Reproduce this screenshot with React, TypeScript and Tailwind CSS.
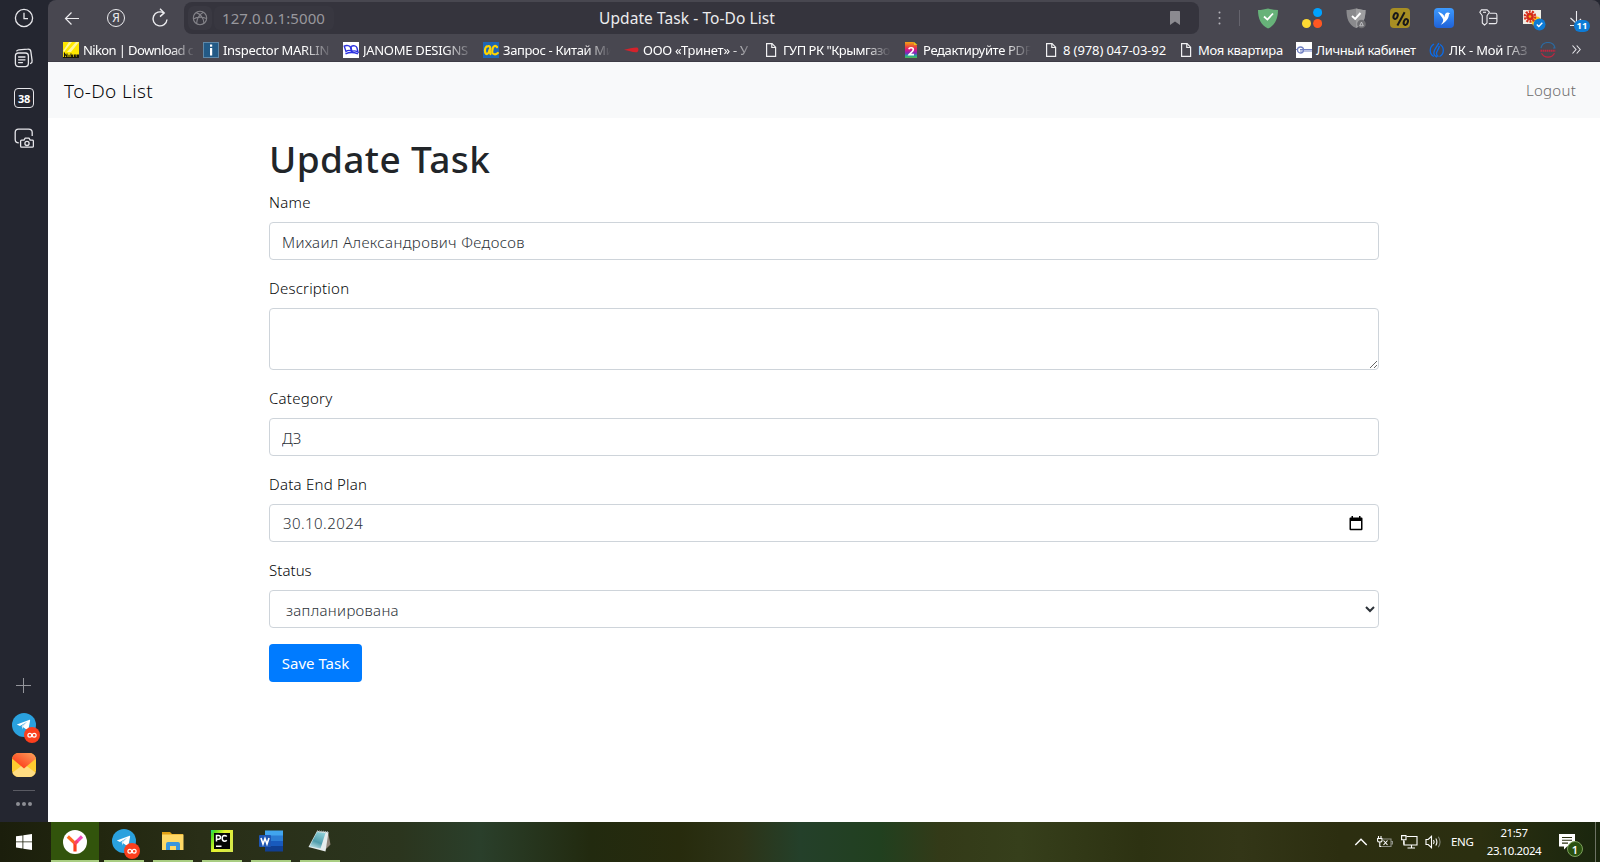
import type { ReactNode } from "react";

/* ---------- Sidebar icons ---------- */

const ClockIcon = () => (
  <svg width="20" height="20" viewBox="0 0 20 20" fill="none" stroke="#e6e6ea" strokeWidth="1.3">
    <circle cx="10" cy="10" r="8.6" />
    <path d="M10 4.8V10.6H14" />
  </svg>
);

const PagesIcon = () => (
  <svg width="20" height="20" viewBox="0 0 20 20" fill="none" stroke="#e6e6ea" strokeWidth="1.3" strokeLinecap="round">
    <rect x="1.4" y="5" width="13" height="13.6" rx="3" />
    <path d="M2.8 2.9C3.4 2.2 4 2 4.8 1.9L13.6 1.2C15.5 1 16.7 2 16.9 3.8L18.1 12.6C18.3 14 17.7 15 16.6 15.5" />
    <path d="M4.6 9H11M4.6 11.8H11M4.6 14.6H8.5" />
  </svg>
);

const ScreenshotIcon = () => (
  <svg width="20" height="20" viewBox="0 0 20 20" fill="none" stroke="#e6e6ea" strokeWidth="1.3" strokeLinejoin="round">
    <path d="M4.8 14.8C2.6 14.8 1.2 13.6 1.2 11.4V4.4C1.2 2.3 2.4 1.2 4.4 1.2H14.6C16.8 1.2 18.2 2.4 18.2 4.4V8" />
    <path d="M7.6 12.2H10L11.2 10.2H15L16.2 12.2H18.4C19 12.2 19.4 12.6 19.4 13.2V18C19.4 18.6 19 19.2 18.4 19.2H7.6C7 19.2 6.6 18.6 6.6 18V13.2C6.6 12.6 7 12.2 7.6 12.2Z" />
    <circle cx="13" cy="15.4" r="2.1" />
  </svg>
);

const TelegramIcon = () => (
  <svg width="28" height="30" viewBox="0 0 28 30">
    <circle cx="12" cy="12" r="12" fill="#2aa1de" />
    <path d="M4.8 11.6L17 6.9C17.8 6.6 18.3 6.9 18.1 7.8L16.4 16.6C16.2 17.4 15.7 17.5 15.1 17.1L9.8 13.3L15.2 8.8L8 12.9Z" fill="#fff" />
    <path d="M9.6 13L15.6 8.6L11.2 13.6L10.6 16.4Z" fill="#d2e6f2" />
    <circle cx="20" cy="22" r="8" fill="#fc3f1d" />
    <g fill="none" stroke="#fff" strokeWidth="1.2">
      <circle cx="17.8" cy="22.2" r="1.9" />
      <circle cx="22.2" cy="22.2" r="1.9" />
    </g>
  </svg>
);

const MailIcon = () => (
  <svg width="24" height="24" viewBox="0 0 24 24">
    <defs>
      <linearGradient id="flap" x1="0" y1="1" x2="1" y2="0">
        <stop offset="0.2" stopColor="#fc3f1d" />
        <stop offset="1" stopColor="#ffa25c" />
      </linearGradient>
      <clipPath id="mailShape"><rect width="24" height="24" rx="6.5" /></clipPath>
    </defs>
    <g clipPath="url(#mailShape)">
      <rect width="24" height="24" fill="#ffcc2f" />
      <path d="M12 11L24 20V24H0V20Z" fill="#ffdc82" />
      <path d="M0 0H24V5.5L12 15.5L0 5.5Z" fill="url(#flap)" />
    </g>
  </svg>
);

/* ---------- Toolbar icons ---------- */

const BackIcon = () => (
  <svg width="16" height="16" viewBox="0 0 16 16" fill="none" stroke="#ececef" strokeWidth="1.2">
    <path d="M16 8.5H2.5M8.5 2.5L2.5 8.5L8.5 14.5" />
  </svg>
);

const ReloadIcon = () => (
  <svg width="18" height="20" viewBox="0 0 18 20" fill="none" stroke="#ececef" strokeWidth="1.4">
    <path d="M12.8 5A7 7 0 1 0 16 11.5" />
    <path d="M9 0.8L13.2 4.9L9 8.6" />
  </svg>
);

const GlobeIcon = () => (
  <svg width="16" height="16" viewBox="0 0 16 16" fill="none" stroke="#85848a" strokeWidth="1.1">
    <circle cx="8" cy="8" r="6.7" />
    <path d="M4.2 2.6C8 3.5 11.5 7.5 12 13.2M11.5 2.3C8 4 5 8 4.6 13.7M1.4 9C5 6.8 10 6.6 14.6 8.6" />
  </svg>
);

const GreenShield = () => (
  <svg width="20" height="21" viewBox="0 0 20 21">
    <path d="M10 0.5C13 1.4 16.5 2 20 2C20 10 17.5 17 10 20.5C2.5 17 0 10 0 2C3.5 2 7 1.4 10 0.5Z" fill="#67b279" />
    <path d="M6 8.5L9.4 11.6L15 5.5" fill="none" stroke="#fff" strokeWidth="1.8" />
  </svg>
);

const ThreeDots = () => (
  <svg width="20" height="20" viewBox="0 0 20 20">
    <circle cx="15.6" cy="4.5" r="4.5" fill="#00a2ff" />
    <circle cx="4.5" cy="15.5" r="4.5" fill="#ffdb33" />
    <circle cx="15.6" cy="15.5" r="4.5" fill="#ff5722" />
  </svg>
);

const GrayShield = () => (
  <svg width="20" height="21" viewBox="0 0 20 21">
    <path d="M10 0.5C13 1.4 16.5 2 19.5 2C19.5 10 17.5 17 10 20C2.5 17 0.5 10 0.5 2C3.5 2 7 1.4 10 0.5Z" fill="#8a8a8d" />
    <path d="M10 0.5C13 1.4 16.5 2 19.5 2C19.5 10 17.5 17 10 20Z" fill="#9e9ea0" />
    <path d="M6 8L9.2 11L14.5 5" fill="none" stroke="#fff" strokeWidth="1.9" />
    <circle cx="15.5" cy="16" r="4.3" fill="#6e6e72" />
    <path d="M13.7 17.8L15.5 14L17.3 17.8Z" fill="none" stroke="#c9c9cc" strokeWidth="0.9" />
  </svg>
);

const PercentIcon = () => (
  <svg width="20" height="20" viewBox="0 0 20 20">
    <rect width="20" height="20" rx="4" fill="#a78e23" />
    <g fill="none" stroke="#17171a" strokeWidth="2">
      <ellipse cx="5.6" cy="8" rx="2" ry="3" transform="rotate(20 5.6 8)" />
      <path d="M14.6 4.2L7.4 17.4" />
      <ellipse cx="15.8" cy="14" rx="2" ry="3" transform="rotate(20 15.8 14)" />
    </g>
  </svg>
);

const BirdIcon = () => (
  <svg width="20" height="20" viewBox="0 0 20 20">
    <defs>
      <linearGradient id="sky" x1="0" y1="0" x2="0" y2="1">
        <stop offset="0" stopColor="#3d9bff" />
        <stop offset="1" stopColor="#1f62d8" />
      </linearGradient>
    </defs>
    <rect width="20" height="20" rx="4" fill="url(#sky)" />
    <path d="M4 3.8C7.2 4.8 9.8 6.6 10.6 9.2C10.4 6.2 12 4.2 14.2 4.4L16.2 5.4L15 6.2C14.8 10.7 12.2 13.6 6.8 16.8C9.4 14 9.8 12 8.4 10C7 7.9 5.5 6.2 4 3.8Z" fill="#fff" />
  </svg>
);

const KeyCardIcon = () => (
  <svg width="19" height="18" viewBox="0 0 19 18" fill="none" stroke="#ececef" strokeWidth="1.1" strokeLinejoin="round">
    <path d="M2.4 0.9H8.2L10.4 3.2L8 6.8V13.8L5.5 16.2L3.3 14V6.8L0.8 3.2Z" />
    <path d="M4 3.3H7" />
    <path d="M10.5 4.2H16.2Q17.9 4.2 17.9 6V12.8Q17.9 14.6 16.2 14.6H9.8" />
    <path d="M10 9.4H17.9" />
  </svg>
);

const FlowerIcon = () => (
  <svg width="24" height="24" viewBox="0 0 24 24">
    <rect x="1" y="2" width="18" height="14" fill="#f1efe6" />
    <circle cx="14.5" cy="13.5" r="5" fill="#ffc61a" />
    <circle cx="8" cy="8.5" r="5" fill="none" stroke="#d9301c" strokeWidth="2.6" strokeDasharray="2 1.1" />
    <circle cx="8" cy="8.5" r="3.8" fill="#d42a18" />
    <circle cx="8" cy="8.5" r="1.3" fill="#f2b31c" />
    <circle cx="17.5" cy="16.5" r="6" fill="#0d7bd6" />
    <path d="M14.8 16.6L16.8 18.5L20.3 14.8" fill="none" stroke="#fff" strokeWidth="1.4" />
  </svg>
);

/* ---------- Bookmark icons ---------- */

const NikonIcon = () => (
  <svg width="16" height="16" viewBox="0 0 16 16">
    <rect width="16" height="16" fill="#ffe800" />
    <path d="M4 10L13 0H16L8 10ZM0 9L6 0H9L1 10Z" fill="#fff79a" />
    <path d="M1.5 15V11.5L4 15V11.5M6 12.8V15M8 11.5V15M10.3 12.8L8.5 14L10.3 15M11.5 13H13V14.7H11.5ZM14.5 15V13H15.5V15" fill="none" stroke="#17150a" strokeWidth="1.1" />
    <path d="M0 15.5H16" stroke="#17150a" />
  </svg>
);

const InspectorIcon = () => (
  <svg width="16" height="16" viewBox="0 0 16 16">
    <rect x="0.5" y="0.5" width="15" height="15" fill="#235a86" stroke="#5f88a8" />
    <rect x="7" y="2.5" width="2.2" height="2.2" fill="#fff" />
    <rect x="7" y="6" width="2.2" height="7.5" fill="#fff" />
  </svg>
);

const JanomeIcon = () => (
  <svg width="16" height="16" viewBox="0 0 16 16">
    <rect width="16" height="16" fill="#fff" />
    <g fill="none" stroke="#2e33e0" strokeWidth="1.4">
      <path d="M1.2 4.2C3.5 3 7 3.5 7.5 5.5L8.5 9C6.5 8 4.5 8.3 3 9.5Z" />
      <path d="M8 4.5C10.5 3 13.5 4 14 6L15 10C12.5 8.8 10.5 8.5 8.8 9.5Z" />
      <path d="M2.5 11.8C6 10.2 11 10.2 15 11.8" />
    </g>
  </svg>
);

const ChinaIcon = () => (
  <svg width="16" height="16" viewBox="0 0 16 16">
    <rect width="16" height="16" fill="#1f66b5" />
    <g fill="none" stroke="#ffd500" strokeWidth="2.2" strokeLinecap="round">
      <path d="M3.5 4.5C1.5 6.5 1.5 10 3 11.8C5 13 6.5 9 7.3 6.5C7.3 4.3 5.5 3.5 4.5 4.5" />
      <path d="M14 5C12.5 3 10.5 4 9.8 6C9 9 8.8 10.5 9.8 11.5C11.5 12.8 13.5 12.3 14.8 11" />
      <path d="M6.5 8C7 9.5 7 11 7.5 12" />
    </g>
  </svg>
);

const TrinetIcon = () => (
  <svg width="16" height="16" viewBox="0 0 16 16">
    <path d="M1 7.8C6 6.8 10 5.4 14 5.5C16 6 15.8 9.5 14 10.2C10 10.7 6 8.8 1 7.8Z" fill="#d5222b" />
  </svg>
);

const PageIcon = () => (
  <svg width="16" height="16" viewBox="0 0 16 16" fill="none" stroke="#f0f0f2" strokeWidth="1.2">
    <path d="M3.6 1.6H9L12.6 5.2V14.4H3.6Z" />
    <path d="M8.8 1.6V5.5H12.6" />
  </svg>
);

const PdfIcon = () => (
  <svg width="16" height="16" viewBox="0 0 16 16">
    <defs>
      <linearGradient id="rainbow" x1="0" y1="0" x2="0" y2="1">
        <stop offset="0" stopColor="#f3a712" />
        <stop offset="0.3" stopColor="#e8453c" />
        <stop offset="0.5" stopColor="#d4168a" />
        <stop offset="0.7" stopColor="#7a2bbd" />
        <stop offset="0.85" stopColor="#1fa8a0" />
        <stop offset="1" stopColor="#58b947" />
      </linearGradient>
    </defs>
    <path d="M0 0H8.5L12 3.5V16H0Z" fill="url(#rainbow)" />
    <path d="M9 0L12.5 3H9Z" fill="#e9c31f" />
    <path d="M3.8 7.2C4.3 5.2 8.5 5.3 8.3 7.8C8 9.8 5 11 4 12.6H9" fill="none" stroke="#fff" strokeWidth="1.6" />
  </svg>
);

const CabinetIcon = () => (
  <svg width="16" height="16" viewBox="0 0 16 16">
    <rect width="16" height="16" fill="#fff" />
    <g fill="none" stroke="#7382c4">
      <circle cx="4.5" cy="8" r="3" strokeWidth="1.3" />
      <path d="M0 7.5H2M4 7.5H16M4 9H16" strokeWidth="1" />
    </g>
  </svg>
);

const GasIcon = () => (
  <svg width="16" height="16" viewBox="0 0 16 16" fill="none" stroke="#0b6be8" strokeWidth="1.3">
    <path d="M5 2C0 5 0 12 5 14.5M11 2.5C15.5 5 15.5 12 10.5 14.5" />
    <path d="M9.8 1C8.5 4.5 4.6 7 4.8 11C5 13 6.5 14.5 8 15.2M10.2 4C10.5 7 7.5 8.5 7.5 11.5C7.5 13 8.5 14 9.5 14.5" />
  </svg>
);

const ServiceIcon = () => (
  <svg width="16" height="16" viewBox="0 0 16 16" fill="none" strokeWidth="1.2">
    <path d="M1 6A7.2 7.2 0 0 1 15 6M13 6H15.5" stroke="#2c6aa0" />
    <path d="M1.5 11.2A7.4 7.4 0 0 0 14.5 11.2" stroke="#c0263f" />
    <path d="M0.5 8.8H15.5" stroke="#c0263f" strokeWidth="2" strokeDasharray="1.6 0.5" />
  </svg>
);

type Bookmark = { icon: ReactNode; label: string; box: string; text: string };

const bookmarks: Bookmark[] = [
  { icon: <NikonIcon />, label: "Nikon | Download c", box: "w-[140px]", text: "w-[110px] tracking-[-0.62px] [mask-image:linear-gradient(to_right,#000_80%,transparent_102%)]" },
  { icon: <InspectorIcon />, label: "Inspector MARLIN", box: "w-[140px]", text: "w-[107px] tracking-[-0.3px] [mask-image:linear-gradient(to_right,#000_75%,transparent_103%)]" },
  { icon: <JanomeIcon />, label: "JANOME DESIGNS", box: "w-[140px]", text: "w-[108px] tracking-[-0.3px] [mask-image:linear-gradient(to_right,#000_75%,transparent_103%)]" },
  { icon: <ChinaIcon />, label: "Запрос - Китай Ми", box: "w-[140px]", text: "w-[110px] tracking-[-0.35px] [mask-image:linear-gradient(to_right,#000_75%,transparent_98%)]" },
  { icon: <TrinetIcon />, label: "ООО «Тринет» - У", box: "w-[140px]", text: "w-[108px] tracking-[-0.25px] [mask-image:linear-gradient(to_right,#000_80%,transparent_105%)]" },
  { icon: <PageIcon />, label: "ГУП РК \"Крымгазо", box: "w-[142px]", text: "w-[110px] tracking-[-0.5px] [mask-image:linear-gradient(to_right,#000_75%,transparent_98%)]" },
  { icon: <PdfIcon />, label: "Редактируйте PDF", box: "w-[138px]", text: "ml-[-2px] w-[110px] tracking-[-0.35px] [mask-image:linear-gradient(to_right,#000_75%,transparent_98%)]" },
  { icon: <PageIcon />, label: "8 (978) 047-03-92", box: "w-[135px]", text: "tracking-[-0.1px]" },
  { icon: <PageIcon />, label: "Моя квартира", box: "w-[118px]", text: "tracking-[-0.33px]" },
  { icon: <CabinetIcon />, label: "Личный кабинет", box: "w-[133px]", text: "tracking-[-0.37px]" },
  { icon: <GasIcon />, label: "ЛК - Мой ГАЗ", box: "w-[111px]", text: "w-[80px] tracking-[-0.2px] [mask-image:linear-gradient(to_right,#000_70%,transparent_105%)]" },
  { icon: <ServiceIcon />, label: "", box: "w-[32px]", text: "" },
];

/* ---------- Browser chrome ---------- */

function Sidebar() {
  return (
    <aside className="flex w-12 shrink-0 flex-col items-center bg-[#242630] pt-2">
      <div className="flex h-5 items-center"><ClockIcon /></div>
      <div className="mt-5 flex h-5 items-center"><PagesIcon /></div>
      <div className="mt-5 flex size-5 items-center justify-center rounded-[4px] border-[1.5px] border-[#e6e6ea] text-[11px] font-bold leading-none tracking-[-0.2px] text-white">38</div>
      <div className="mt-5 flex h-5 items-center"><ScreenshotIcon /></div>
      <svg className="mt-auto" width="16" height="16" viewBox="0 0 16 16" stroke="#94959b" strokeWidth="1"><path d="M7.5 0V15M0 7.5H15" /></svg>
      <div className="ml-1 mt-[19px]"><TelegramIcon /></div>
      <div className="mt-2.5"><MailIcon /></div>
      <div className="mt-[13px] h-px w-[22px] bg-[#5a5b63]" />
      <div className="mb-4 mt-[11px] flex gap-0.5">
        <span className="size-1 rounded-full bg-[#8d8e94]" />
        <span className="size-1 rounded-full bg-[#8d8e94]" />
        <span className="size-1 rounded-full bg-[#8d8e94]" />
      </div>
    </aside>
  );
}

function Toolbar() {
  return (
    <div className="flex h-9 items-center pl-[15px]">
      <div className="w-11"><BackIcon /></div>
      <div className="flex w-11 items-center">
        <span className="flex size-[18px] items-center justify-center rounded-full border-[1.3px] border-[#ececef] text-[12px] leading-none text-[#ececef]">Я</span>
      </div>
      <div className="w-[33px]"><ReloadIcon /></div>
      <div className="flex h-8 w-[1015px] items-center rounded-lg bg-[#35343d] pl-1">
        <span className="flex size-6 items-center justify-center rounded-md bg-[#3a3942]"><GlobeIcon /></span>
        <span className="ml-0.5 flex h-6 w-[120px] items-center rounded-md bg-[#383740] pl-2 text-[15px] leading-6 tracking-[0.08px] text-[#98979d]">127.0.0.1:5000</span>
        <div className="ml-[265px] text-[15.5px] leading-6 tracking-[0.08px] text-[#ececee]">Update Task - To-Do List</div>
        <svg className="ml-auto mr-[19px]" width="10" height="14" viewBox="0 0 10 14" fill="#8b8a90"><path d="M0 0.8Q0 0 0.8 0H9.2Q10 0 10 0.8V14L5 10.5L0 14Z" /></svg>
      </div>
      <div className="flex w-10 justify-center">
        <svg width="3" height="14" viewBox="0 0 3 14" fill="#b5b4ba"><circle cx="1.5" cy="1.5" r="1" /><circle cx="1.5" cy="7" r="1" /><circle cx="1.5" cy="12.5" r="1" /></svg>
      </div>
      <div className="h-4 w-px bg-[#65646d]" />
      <div className="ml-1.5 flex items-center">
        <span className="flex w-11 justify-center"><GreenShield /></span>
        <span className="flex w-11 justify-center"><ThreeDots /></span>
        <span className="flex w-11 justify-center"><GrayShield /></span>
        <span className="flex w-11 justify-center"><PercentIcon /></span>
        <span className="flex w-11 justify-center"><BirdIcon /></span>
        <span className="flex w-11 justify-center"><KeyCardIcon /></span>
        <span className="flex w-11 justify-center pl-1 pt-1"><FlowerIcon /></span>
        <span className="relative h-5 w-[36px] pl-[15px]">
          <svg width="16" height="18" viewBox="0 0 16 18" fill="none" stroke="#ececef" strokeWidth="1.1"><path d="M7.5 3V14M1.5 10L7.5 15.5M12 11L8 15M1 17.5H5" /></svg>
          <span className="absolute -bottom-1 right-0 flex h-3 w-4 items-center justify-center rounded-full bg-[#0d7bd6] text-[9.5px] font-bold leading-none text-white">11</span>
        </span>
      </div>
    </div>
  );
}

function BookmarkBar() {
  return (
    <div className="flex h-[26px] items-center pb-px pl-[15px] pt-0.5">
      {bookmarks.map((b, i) => (
        <div key={i} className={`flex shrink-0 items-center gap-1 ${b.box}`}>
          <span className="shrink-0">{b.icon}</span>
          {b.label && <span className={`shrink-0 whitespace-nowrap text-[13px] leading-5 text-white ${b.text}`}>{b.label}</span>}
        </div>
      ))}
      <svg width="9" height="9" viewBox="0 0 9 9" fill="none" stroke="#e6e6ea" strokeWidth="1.1"><path d="M0.5 0.5L4 4.5L0.5 8.5M4.7 0.5L8.2 4.5L4.7 8.5" /></svg>
    </div>
  );
}

/* ---------- Page ---------- */

const fieldClass = "block h-[38px] w-full rounded border border-[#ced4da] bg-white px-3 text-[15px] font-light leading-6 text-[#2c3238] outline-none";

function Field({ label, tracking, children }: { label: string; tracking: string; children: ReactNode }) {
  return (
    <div className="mb-4">
      <label className={`mb-2 block text-[15px] leading-6 text-[#060709] ${tracking}`}>{label}</label>
      {children}
    </div>
  );
}

function Page() {
  return (
    <main className="flex-1 bg-white font-light text-[#212529]">
      <nav className="flex h-14 items-center justify-between bg-[#f8f9fa] px-4">
        <a className="pt-px text-[19px] leading-[30px] tracking-[0.38px] text-[#060709]">To-Do List</a>
        <a className="pr-2 text-[15px] leading-6 tracking-[0.25px] text-[#6c6c6c]">Logout</a>
      </nav>
      <div className="mx-auto w-[1140px] px-[15px] pt-4">
        <h1 className="mb-2 pt-0.5 text-[37px] font-medium leading-[46px] tracking-[0.38px]">Update Task</h1>
        <Field label="Name" tracking="tracking-[0.28px]">
          <input className={`${fieldClass} pt-0.5 tracking-[0.37px]`} defaultValue="Михаил Александрович Федосов" />
        </Field>
        <Field label="Description" tracking="tracking-[0.22px]">
          <textarea className="block h-[62px] w-full resize rounded border border-[#ced4da] bg-white px-3 py-1.5 outline-none" />
        </Field>
        <Field label="Category" tracking="tracking-[0.24px]">
          <input className={`${fieldClass} pt-0.5`} defaultValue="ДЗ" />
        </Field>
        <Field label="Data End Plan" tracking="tracking-[0.24px]">
          <div className={`${fieldClass} flex items-center justify-between`}>
            <span className="pl-px tracking-[0.44px]">30.10.2024</span>
            <svg className="mr-[3px]" width="14" height="15" viewBox="0 0 14 15" fill="#000"><path d="M2.5 0H4V1.5H10V0H11.5V1.5H12.5Q13.5 1.5 13.5 2.5V13Q13.5 14.2 12.5 14.2H1.5Q0.5 14.2 0.5 13V2.5Q0.5 1.5 1.5 1.5H2.5ZM2 5V12.8H12V5Z" fillRule="evenodd" /></svg>
          </div>
        </Field>
        <Field label="Status" tracking="tracking-[0.05px]">
          <select className={`${fieldClass} pt-0.5 tracking-[0.32px]`} defaultValue="запланирована">
            <option>запланирована</option>
          </select>
        </Field>
        <button className="h-[38px] w-[93px] rounded bg-[#007bff] text-[15px] font-normal leading-6 text-white">Save Task</button>
      </div>
    </main>
  );
}

/* ---------- Taskbar ---------- */

const WindowsIcon = () => (
  <svg width="16" height="16" viewBox="0 0 16 16" fill="#fff"><path d="M0 2.3L6.5 1.4V7.5H0ZM7.3 1.3L16 0V7.5H7.3ZM0 8.3H6.5V14.5L0 13.6ZM7.3 8.3H16V16L7.3 14.7Z" /></svg>
);

const YandexIcon = () => (
  <svg width="24" height="24" viewBox="0 0 24 24">
    <circle cx="12" cy="12" r="12" fill="#fff" />
    <g fill="none" strokeWidth="3.2">
      <path d="M12 21.5V13" stroke="#fc3f1d" />
      <path d="M4.8 6.5L12 13.4" stroke="#ff6a1f" />
      <path d="M12 13.4L19 6.5" stroke="#f24bb8" />
      <path d="M11.5 13.9L14.5 11" stroke="#fb4560" />
    </g>
  </svg>
);

const FolderIcon = () => (
  <svg width="24" height="24" viewBox="0 0 24 24">
    <path d="M1 3H9L11 5H22V8H1Z" fill="#e2a114" />
    <rect x="1" y="5.5" width="21.5" height="15.5" fill="#ffd966" />
    <path d="M5 21V15Q5 13 7 13H17Q19 13 19 15V21H15V17H9V21Z" fill="#3a96dd" />
  </svg>
);

const PyCharmIcon = () => (
  <svg width="22" height="22" viewBox="0 0 22 22">
    <defs>
      <linearGradient id="pc" x1="0" y1="0" x2="1" y2="0.6">
        <stop offset="0" stopColor="#21d789" />
        <stop offset="0.15" stopColor="#52e01c" />
        <stop offset="0.5" stopColor="#e9f22e" />
        <stop offset="1" stopColor="#d5e84a" />
      </linearGradient>
    </defs>
    <rect width="22" height="22" fill="url(#pc)" />
    <rect x="3" y="3" width="16" height="16" fill="#050505" />
    <g fill="none" stroke="#fff" strokeWidth="1.5">
      <path d="M5.5 11.5V5.5H7.5Q9.5 5.5 9.5 7.3Q9.5 9.2 7.5 9.2H5.5" />
      <path d="M15.8 6.5Q14.8 5.4 13.5 5.4Q11.2 5.5 11.2 8.3Q11.2 11.2 13.5 11.2Q14.8 11.2 15.8 10.2" />
    </g>
    <rect x="5" y="15.5" width="5.5" height="1.5" fill="#fff" />
  </svg>
);

const WordIcon = () => (
  <svg width="24" height="22" viewBox="0 0 24 22">
    <rect x="6" y="0.5" width="18" height="5.5" fill="#41a5ee" />
    <rect x="6" y="5.5" width="18" height="5.5" fill="#2b7cd3" />
    <rect x="6" y="11" width="18" height="5.5" fill="#185abd" />
    <rect x="6" y="16" width="18" height="5.5" fill="#103f91" />
    <rect y="5" width="12" height="12" rx="1" fill="#1e56b3" />
    <path d="M2 8L4 14L6 8.5L8 14L10 8" fill="none" stroke="#fff" strokeWidth="1.6" />
  </svg>
);

const NotepadIcon = () => (
  <svg width="24" height="24" viewBox="0 0 24 24">
    <defs>
      <linearGradient id="pad" x1="0.7" y1="0" x2="0.3" y2="1">
        <stop offset="0" stopColor="#8fd0d8" />
        <stop offset="0.6" stopColor="#4f9dac" />
        <stop offset="1" stopColor="#b9dfe4" />
      </linearGradient>
    </defs>
    <path d="M20 3L22.5 15.5L16 22L18 3Z" fill="#8f8376" />
    <path d="M9 2L20.5 3L17.5 22.5L0.5 18Z" fill="#e6ecec" />
    <path d="M9 3L17.5 4L12.5 19.5L1.5 17.5Z" fill="url(#pad)" />
    <path d="M9 2L20.5 3" stroke="#9aa7a8" strokeWidth="1.5" strokeDasharray="1 1" />
  </svg>
);

const TaskItem = ({ children }: { children: ReactNode }) => (
  <div className="mr-[9px] flex h-10 w-10 flex-col items-center">
    <div className="flex flex-1 items-center">{children}</div>
    <div className="h-0.5 w-full bg-[#a9cd82]" />
  </div>
);

function Taskbar() {
  return (
    <footer className="flex h-10 shrink-0 items-center bg-[linear-gradient(to_right,#1b1e0c_0px,#22270f_100px,#292e17_200px,#2b351e_400px,#2a3f2b_480px,#222a0f_590px,#272b0d_680px,#2d3317_740px,#24402a_800px,#21401f_880px,#333a18_940px,#363f1b_1020px,#2d3212_1140px,#333617_1240px,#2c2e10_1340px,#2b2f10_1480px,#1a260e_1600px)] text-white">
      <div className="flex w-[51px] justify-center pr-[3px]"><WindowsIcon /></div>
      <div className="mr-[5px] flex h-10 w-12 flex-col items-center bg-[#32540c]">
        <div className="flex flex-1 items-center pt-0.5"><YandexIcon /></div>
        <div className="h-0.5 w-full bg-[#a9cd82]" />
      </div>
      <TaskItem><div className="ml-1 mt-1.5"><TelegramIcon /></div></TaskItem>
      <TaskItem><FolderIcon /></TaskItem>
      <TaskItem><PyCharmIcon /></TaskItem>
      <TaskItem><WordIcon /></TaskItem>
      <TaskItem><NotepadIcon /></TaskItem>
      <div className="ml-auto flex items-center">
        <svg width="14" height="8" viewBox="0 0 14 8" fill="none" stroke="#fff" strokeWidth="1.4"><path d="M1.3 7L7 1.3L12.7 7" /></svg>
        <svg className="ml-[9px]" width="16" height="12" viewBox="0 0 16 12" fill="none" stroke="#fff" strokeWidth="1.1">
          <path d="M1.5 0V2.5M4 0V2.5M0.6 2.5H5V5Q5 6 2.8 6Q0.6 6 0.6 5ZM2.8 6V10.5H4.5" />
          <path d="M6 3H14V10.5H5M14 5.5H15.5V8H14" stroke="#8f9186" />
          <path d="M6.5 4.5L10.5 9M10.5 4.5L6.5 9" />
        </svg>
        <svg className="ml-2" width="17" height="14" viewBox="0 0 17 14" fill="none" stroke="#fff" strokeWidth="1.1">
          <path d="M5.5 1.5H16V10H5.5M3 6V10H6M10.5 10V13M6.5 13H14" />
          <path d="M0.6 0.6H5V4.8H0.6ZM2.8 5V9.5" />
        </svg>
        <svg className="ml-[7px]" width="18" height="14" viewBox="0 0 18 14" fill="none" stroke="#fff" strokeWidth="1.1">
          <path d="M1 4.5H3.2L6.5 1.3V12.7L3.2 9.5H1Z" />
          <path d="M8.5 5Q9.8 7 8.5 9M10.8 3.5Q13 7 10.8 10.5" />
          <path d="M13.3 1.8Q16.8 7 13.3 12.2" stroke="#85877a" />
        </svg>
        <span className="ml-2 w-[23px] whitespace-nowrap text-[11.5px] leading-4 tracking-[-0.3px]">ENG</span>
        <div className="ml-[11px] flex w-[58px] flex-col items-center whitespace-nowrap text-[11.5px] leading-[18px] tracking-[-0.45px]">
          <span>21:57</span>
          <span>23.10.2024</span>
        </div>
        <div className="relative ml-4">
          <svg width="16" height="16" viewBox="0 0 16 16"><path d="M0 0H16V12.5H8L5 15.5V12.5H0Z" fill="#fff" /><path d="M3 3.5H13M3 6.3H13M3 9.1H9" stroke="#2b3110" strokeWidth="1.1" /></svg>
          <span className="absolute left-2 top-[7px] flex size-4 items-center justify-center rounded-full border border-[#7da05d] bg-[#2a510f] text-[11px] font-semibold leading-none">1</span>
        </div>
        <div className="ml-5 mr-1 h-10 w-px bg-[#6d7264]" />
      </div>
    </footer>
  );
}

export default function App() {
  return (
    <div className="flex h-[862px] w-[1600px] flex-col overflow-hidden bg-[#242630] font-['Noto_Sans','Open_Sans',sans-serif]">
      <div className="flex min-h-0 flex-1">
        <Sidebar />
        <div className="flex flex-1 flex-col">
          <header className="h-[62px] rounded-t-lg border-b border-[#3d3c45] bg-[#484750]">
            <Toolbar />
            <BookmarkBar />
          </header>
          <Page />
        </div>
      </div>
      <Taskbar />
    </div>
  );
}
